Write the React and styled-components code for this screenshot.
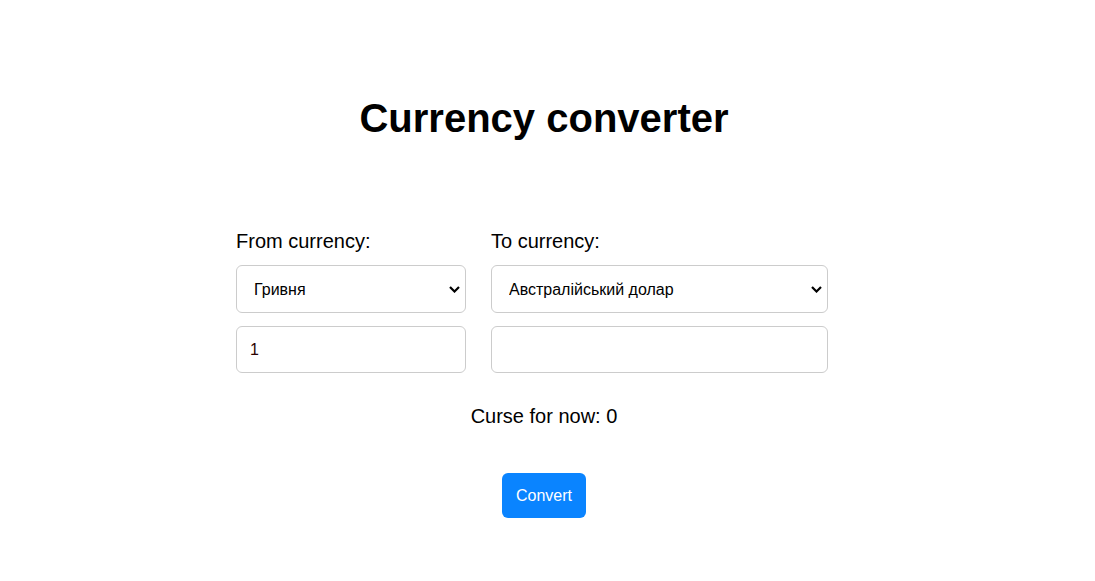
import { useState } from "react";
import styled, { createGlobalStyle } from "styled-components";

const GlobalStyle = createGlobalStyle`
  body {
    margin: 0;
    background: #fff;
    font-family: "Liberation Sans", Arial, sans-serif;
    color: #000;
  }
`;

const chevron =
  "data:image/svg+xml;utf8," +
  encodeURIComponent(
    '<svg xmlns="http://www.w3.org/2000/svg" width="11" height="7" viewBox="0 0 11 7"><path d="M1 1l4.5 4.5L10 1" fill="none" stroke="#000" stroke-width="2.2"/></svg>'
  );

const Page = styled.div`
  display: flex;
  flex-direction: column;
  align-items: center;
  padding-right: 7px;
`;

const Title = styled.h1`
  margin: 95px 0 0;
  font-size: 40px;
  line-height: 46px;
  font-weight: 700;
`;

const FormWrap = styled.div`
  margin-top: 89px;
  padding-right: 24px;
`;

const Columns = styled.div`
  display: grid;
  grid-template-columns: 230px 337px;
  column-gap: 25px;
`;

const Column = styled.div`
  display: flex;
  flex-direction: column;
`;

const Label = styled.label`
  font-size: 20px;
  line-height: 23px;
  margin-bottom: 12px;
`;

const Select = styled.select`
  appearance: none;
  height: 48px;
  box-sizing: border-box;
  border: 1px solid #ccc;
  border-radius: 6px;
  padding: 0 24px 0 17px;
  font-family: "Liberation Sans", Arial, sans-serif;
  font-size: 16px;
  color: #000;
  background: #fff url("${chevron}") no-repeat right 5px center;
  margin-bottom: 13px;
  outline: none;
`;

const Input = styled.input`
  height: 47px;
  box-sizing: border-box;
  border: 1px solid #ccc;
  border-radius: 6px;
  padding: 0 13px;
  font-family: "Liberation Sans", Arial, sans-serif;
  font-size: 16px;
  color: #2a0000;
  outline: none;
`;

const Rate = styled.p`
  margin: 32px 0 0;
  font-size: 20px;
  line-height: 23px;
  text-align: center;
`;

const Button = styled.button`
  margin-top: 45px;
  height: 45px;
  padding: 0 14px;
  border: none;
  border-radius: 6px;
  background: #0a84ff;
  color: #fff;
  font-family: "Liberation Sans", Arial, sans-serif;
  font-size: 16px;
  cursor: pointer;
`;

const currencies = ["Гривня", "Австралійський долар", "Долар США", "Євро"];

function App() {
  const [from, setFrom] = useState("Гривня");
  const [to, setTo] = useState("Австралійський долар");
  const [amount, setAmount] = useState("1");

  return (
    <Page>
      <GlobalStyle />
      <Title>Currency converter</Title>
      <FormWrap>
        <Columns>
          <Column>
            <Label>From currency:</Label>
            <Select value={from} onChange={(e) => setFrom(e.target.value)}>
              {currencies.map((c) => (
                <option key={c}>{c}</option>
              ))}
            </Select>
            <Input value={amount} onChange={(e) => setAmount(e.target.value)} />
          </Column>
          <Column>
            <Label>To currency:</Label>
            <Select value={to} onChange={(e) => setTo(e.target.value)}>
              {currencies.map((c) => (
                <option key={c}>{c}</option>
              ))}
            </Select>
            <Input readOnly value="" />
          </Column>
        </Columns>
      </FormWrap>
      <Rate>Curse for now: 0</Rate>
      <Button>Convert</Button>
    </Page>
  );
}

export default App;
